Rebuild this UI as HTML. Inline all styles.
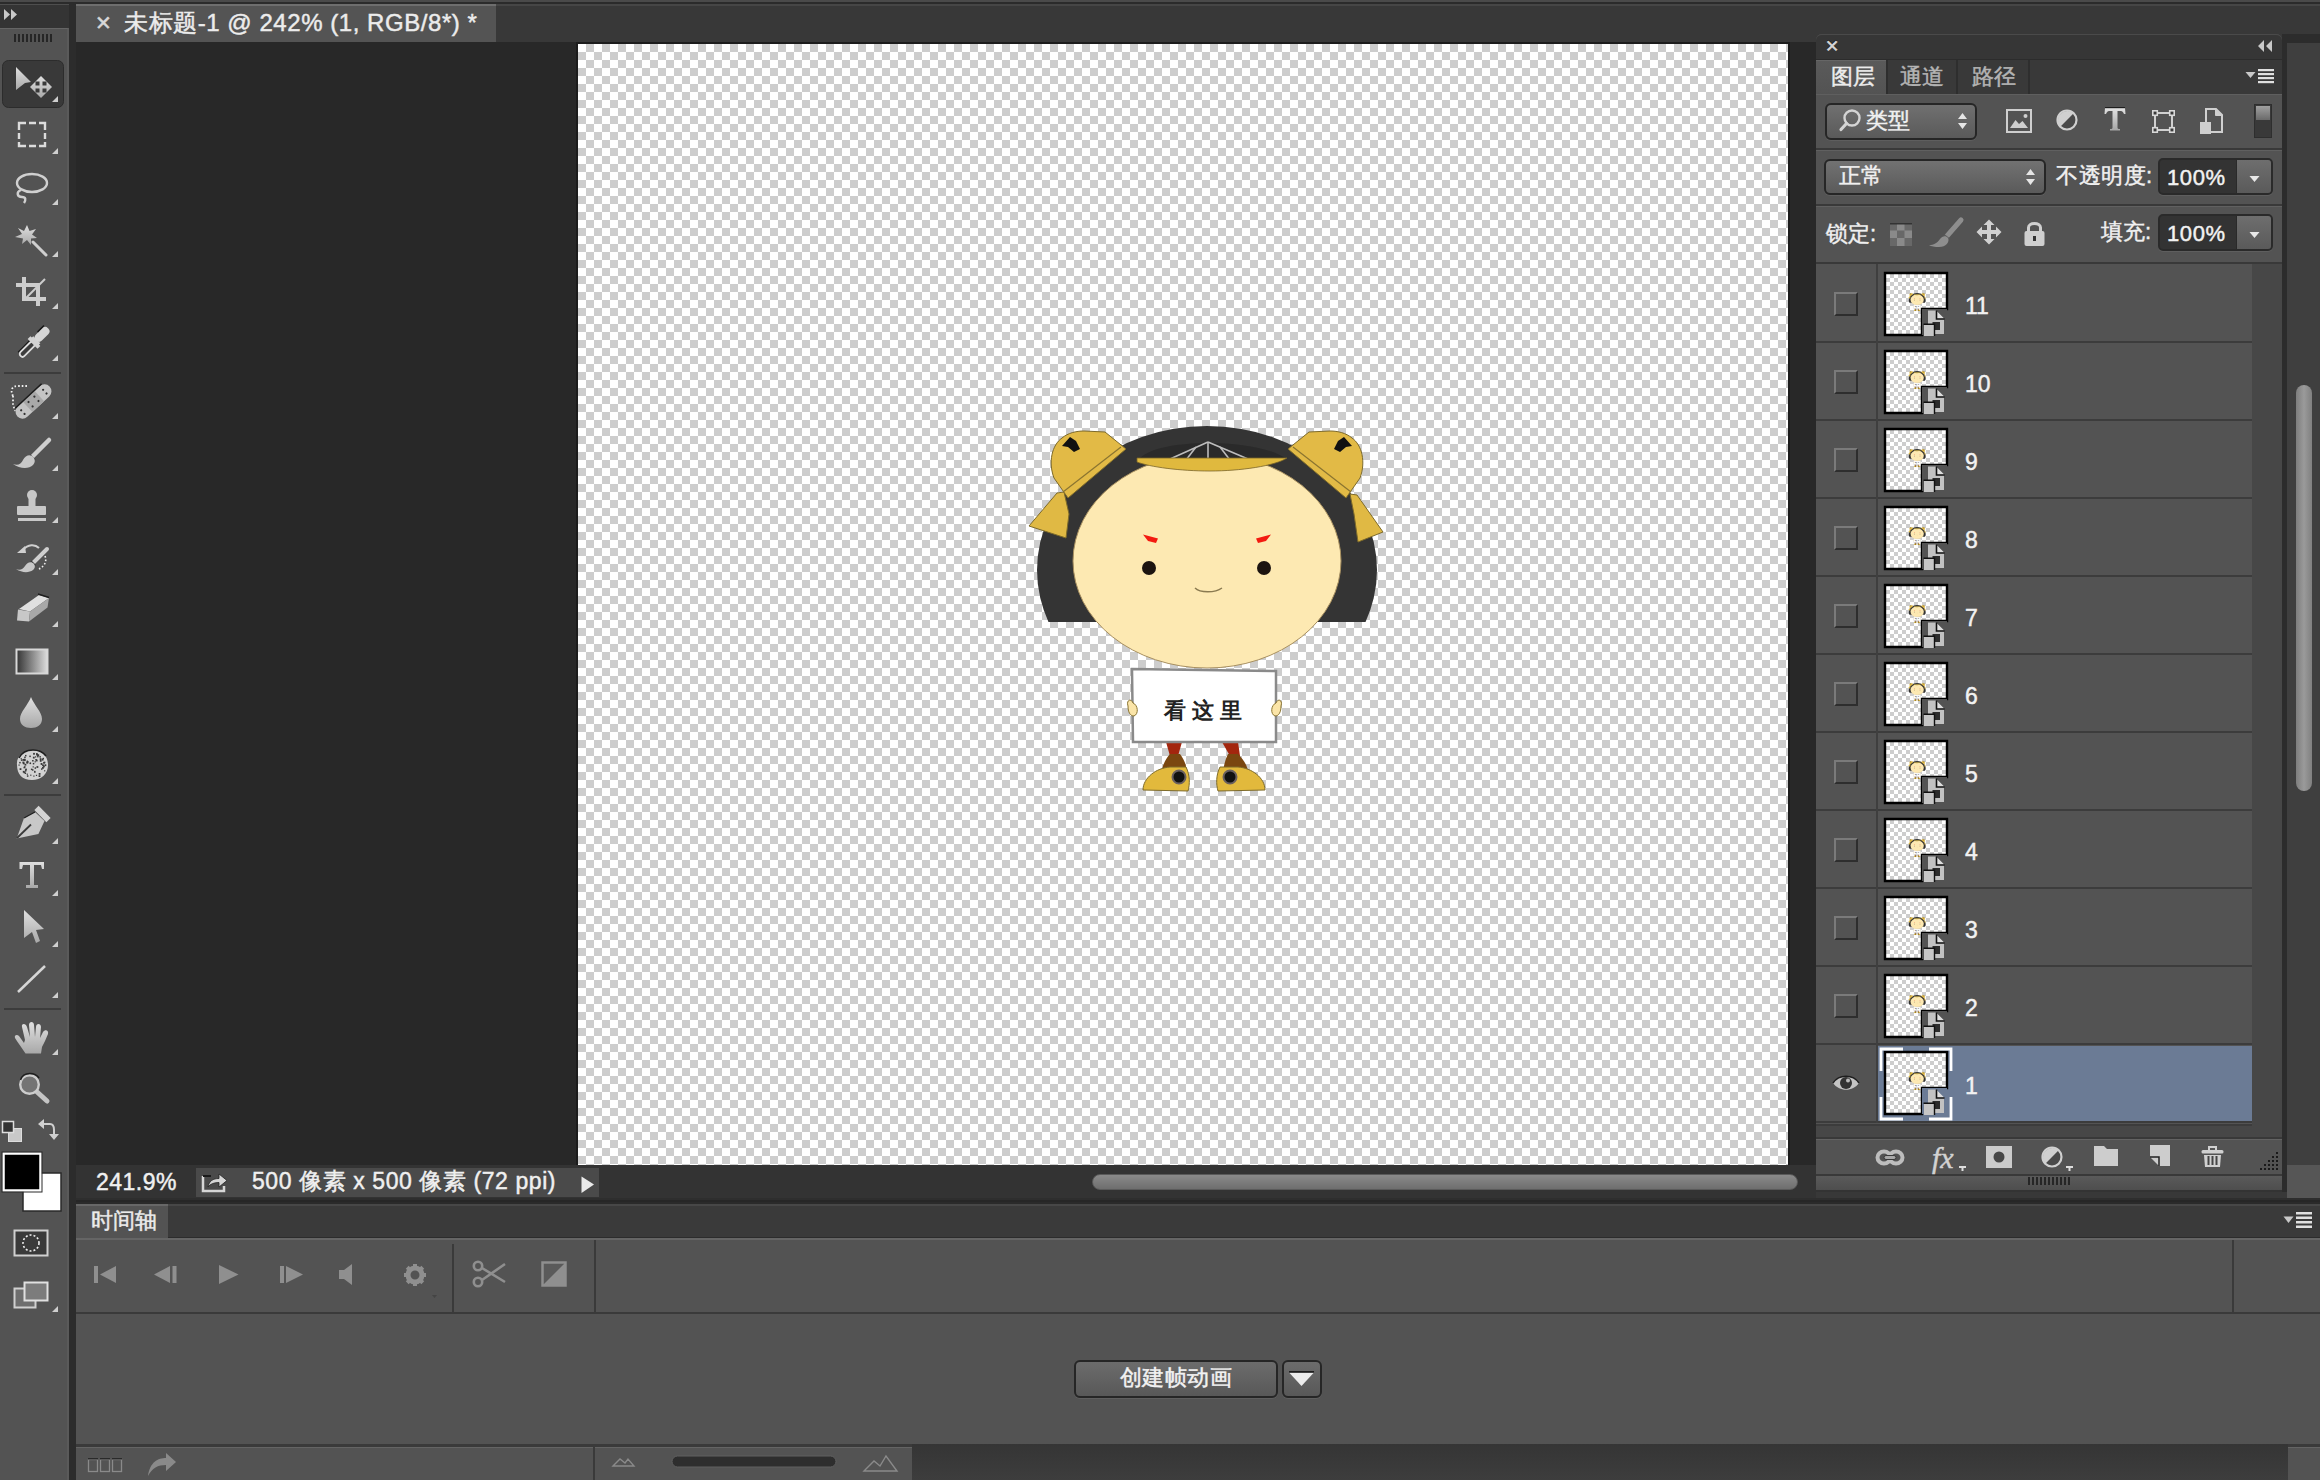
<!DOCTYPE html>
<html><head><meta charset="utf-8">
<style>
*{margin:0;padding:0;box-sizing:border-box}
html,body{width:2320px;height:1480px;overflow:hidden;background:#282828;font-family:"Liberation Sans",sans-serif;color:#e8e8e8}
.a{position:absolute}
svg{position:absolute;overflow:visible}
.t{position:absolute;white-space:nowrap;line-height:1;-webkit-text-stroke:0.45px currentColor}
</style></head><body>
<!-- top strip -->
<div class="a" style="left:0;top:0;width:2320px;height:2px;background:#4a4a4a"></div>
<div class="a" style="left:0;top:2px;width:2320px;height:2px;background:#2b2b2b"></div>
<!-- tab bar bg -->
<div class="a" style="left:76px;top:4px;width:2244px;height:38px;background:#383838;border-top:2px solid #464646"></div>
<div class="a" style="left:69px;top:4px;width:7px;height:1476px;background:#2c2c2c"></div>
<!-- toolbar header -->
<div class="a" style="left:0;top:4px;width:69px;height:24px;background:#343434;border-top:1px solid #4e4e4e"></div>
<!-- toolbar body -->
<div class="a" style="left:0;top:28px;width:69px;height:1452px;background:#535353;border-top:1px solid #656565;border-right:2px solid #5a5a5a"></div>



<svg width="0" height="0" style="position:absolute">
<defs>
<symbol id="ch" viewBox="0 0 1210 1210">
<g transform="translate(-578 -44)">
<!-- hair -->
<clipPath id="hc"><rect x="1000" y="400" width="420" height="222"/></clipPath>
<ellipse cx="1207" cy="570" rx="170" ry="144" fill="#343434" clip-path="url(#hc)"/>
<!-- gold triangles -->
<polygon points="1029,526 1057,493 1064,492 1069,514 1066,538" fill="#e0b944" stroke="#7d6a2a" stroke-width="1"/>
<polygon points="1350,494 1357,495 1383,532 1358,542 1354,514" fill="#e0b944" stroke="#7d6a2a" stroke-width="1"/>
<!-- buns -->
<path d="M1084 431 L1105 432 L1126 449 L1068 498 L1054 478 C1048 462 1052 445 1062 438 C1068 433 1076 431 1084 431Z" fill="#e2ba46" stroke="#7d6a2a" stroke-width="1"/>
<path d="M1121 447 L1063 492" stroke="#8a7430" stroke-width="1.2"/>
<path d="M1330 431 L1309 432 L1288 449 L1346 498 L1360 478 C1366 462 1362 445 1352 438 C1346 433 1338 431 1330 431Z" fill="#e2ba46" stroke="#7d6a2a" stroke-width="1"/>
<path d="M1293 447 L1351 492" stroke="#8a7430" stroke-width="1.2"/>
<path d="M1062 446 L1070 437 L1076 441 L1080 449 L1074 452 L1068 447Z" fill="#111"/>
<path d="M1352 446 L1344 437 L1338 441 L1334 449 L1340 452 L1346 447Z" fill="#111"/>
<!-- face -->
<ellipse cx="1207" cy="561" rx="134" ry="107" fill="#fde9b2" stroke="#a89060" stroke-width="1"/>
<!-- hat top fan -->
<path d="M1140 458 C1160 438 1255 438 1285 458Z" fill="#2a2a2a"/>
<g stroke="#bdbdbd" stroke-width="1.6" fill="none">
<path d="M1208 442 L1208 460"/><path d="M1208 442 L1170 459"/><path d="M1208 442 L1248 459"/>
<path d="M1196 447 L1186 460"/><path d="M1220 447 L1230 460"/>
</g>
<!-- hat band -->
<path d="M1137 458 L1287 458 C1275 466 1240 471 1210 471 C1180 471 1150 467 1137 462Z" fill="#e0b93e" stroke="#7a6528" stroke-width="0.8"/>
<!-- brows -->
<polygon points="1143,534.5 1158,538.5 1156,543 1148,541" fill="#f31a10"/>
<polygon points="1271,534.5 1256,538.5 1258,543 1266,541" fill="#f31a10"/>
<!-- eyes -->
<circle cx="1149" cy="568" r="7" fill="#1c1410"/>
<circle cx="1264" cy="568" r="7" fill="#1c1410"/>
<!-- mouth -->
<path d="M1195 588 C1200 593 1215 593 1222 588" stroke="#8a7a50" stroke-width="1.4" fill="none"/>
<!-- legs -->
<polygon points="1166,742 1182,742 1178,756 1170,756" fill="#a3260e"/>
<polygon points="1222,742 1238,742 1240,756 1230,756" fill="#a3260e"/>
<path d="M1170 754 L1180 754 C1186 762 1188 770 1186 780 L1162 782 C1160 772 1163 762 1170 754Z" fill="#7a4710"/>
<path d="M1228 754 L1238 754 C1246 762 1250 770 1248 782 L1224 782 C1222 772 1224 762 1228 754Z" fill="#7a4710"/>
<!-- shoes -->
<path d="M1143 790 C1143 778 1156 768 1170 767 L1186 767 C1190 775 1190 784 1188 791Z" fill="#e2b93c" stroke="#7d6a2a" stroke-width="1"/>
<path d="M1265 790 C1265 778 1252 768 1238 767 L1220 767 C1216 775 1216 784 1218 791Z" fill="#e2b93c" stroke="#7d6a2a" stroke-width="1"/>
<circle cx="1179" cy="777" r="6.5" fill="#111" stroke="#6a6060" stroke-width="2"/>
<circle cx="1230" cy="777" r="6.5" fill="#111" stroke="#6a6060" stroke-width="2"/>
<!-- sign -->
<polygon points="1132,669 1276,671 1276,742 1133,742" fill="#fff" stroke="#8a8a8a" stroke-width="2.5"/>
<text x="1164" y="718" font-family="Liberation Sans" font-size="22" font-weight="bold" fill="#222" letter-spacing="6">看这里</text>
<!-- hands -->
<path d="M1128 706 C1126 700 1131 698 1133 703 C1138 705 1139 714 1134 716 C1130 716 1128 712 1128 706Z" fill="#fbe5a8" stroke="#8a7430" stroke-width="1"/>
<path d="M1281 706 C1283 700 1278 698 1276 703 C1271 705 1270 714 1275 716 C1279 716 1281 712 1281 706Z" fill="#fbe5a8" stroke="#8a7430" stroke-width="1"/>
</g>
</symbol>
<pattern id="ck4" width="8" height="8" patternUnits="userSpaceOnUse" x="2" y="2"><rect width="8" height="8" fill="#fff"/><rect x="4" width="4" height="4" fill="#cdcdcd"/><rect y="4" width="4" height="4" fill="#cdcdcd"/></pattern>
</defs>
</svg>

<!-- toolbar icons -->
<svg style="left:0;top:0" width="70" height="1480" viewBox="0 0 70 1480">
<defs>
<linearGradient id="ig" x1="0" y1="0" x2="0" y2="1"><stop offset="0" stop-color="#e0e0e0"/><stop offset="1" stop-color="#a8a8a8"/></linearGradient>
</defs>
<g fill="#c9c9c9"><path d="M4 9 L10 14.5 L4 20Z M11 9 L17 14.5 L11 20Z"/></g>
<g fill="#262626"><rect x="14" y="34" width="2" height="8"/><rect x="18" y="34" width="2" height="8"/><rect x="22" y="34" width="2" height="8"/><rect x="26" y="34" width="2" height="8"/><rect x="30" y="34" width="2" height="8"/><rect x="34" y="34" width="2" height="8"/><rect x="38" y="34" width="2" height="8"/><rect x="42" y="34" width="2" height="8"/><rect x="46" y="34" width="2" height="8"/><rect x="50" y="34" width="2" height="8"/></g>
<!-- selected box -->
<rect x="2.5" y="60.5" width="61" height="47" rx="6" fill="#393939" stroke="#2c2c2c" stroke-width="1"/>
<g fill="url(#ig)">
<path d="M16 67 L31 82 L25 83 L16 90Z"/>
<path d="M41 76 L52 87 L41 98 L30 87Z"/></g><g fill="#393939"><rect x="35.5" y="81.5" width="4" height="4"/><rect x="42.5" y="81.5" width="4" height="4"/><rect x="35.5" y="88.5" width="4" height="4"/><rect x="42.5" y="88.5" width="4" height="4"/></g><g>
</g>
<g fill="#cfcfcf">
<path d="M58 96 L58 102 L52 102Z"/><path d="M58 148 L58 154 L52 154Z"/><path d="M58 199 L58 205 L52 205Z"/>
<path d="M58 251 L58 257 L52 257Z"/><path d="M58 303 L58 309 L52 309Z"/><path d="M58 355 L58 361 L52 361Z"/>
<path d="M58 413 L58 419 L52 419Z"/><path d="M58 465 L58 471 L52 471Z"/><path d="M58 517 L58 523 L52 523Z"/>
<path d="M58 569 L58 575 L52 575Z"/><path d="M58 621 L58 627 L52 627Z"/><path d="M58 674 L58 680 L52 680Z"/>
<path d="M58 726 L58 732 L52 732Z"/><path d="M58 778 L58 784 L52 784Z"/>
<path d="M58 838 L58 844 L52 844Z"/><path d="M58 890 L58 896 L52 896Z"/><path d="M58 941 L58 947 L52 947Z"/>
<path d="M58 992 L58 998 L52 998Z"/><path d="M58 1049 L58 1055 L52 1055Z"/>
<path d="M58 1306 L58 1312 L52 1312Z"/>
</g>
<!-- marquee -->
<g fill="none" stroke="#dcdcdc" stroke-width="2.4"><path d="M19 130 V123 H26 M29 123 H36 M39 123 H45 V130 M45 133 V139 M45 142 V146 H39 M36 146 H29 M26 146 H19 V142 M19 139 V133"/></g>
<!-- lasso -->
<g fill="none" stroke="#d0d0d0" stroke-width="2.4">
<ellipse cx="32" cy="183" rx="15" ry="9"/>
<path d="M21 190 C16 192 17 197 22 197 C26 197 26 200 24 203"/>
</g>
<!-- wand -->
<path fill="url(#ig)" d="M27 225 L29.5 231 L36 229 L32 234.5 L37 238 L31 238.5 L31 245 L27 240 L22 244 L23 238.5 L15 237 L22 234 L18 228 L24 231Z"/>
<path d="M33 242 L46 255" stroke="#cfcfcf" stroke-width="3" stroke-linecap="round"/>
<!-- crop -->
<g fill="#cdcdcd">
<rect x="22" y="277" width="4" height="24"/><rect x="16" y="283" width="24" height="4"/>
<rect x="36" y="283" width="4" height="23"/><rect x="22" y="297" width="24" height="4"/>
<path d="M25 299 L45 279" stroke="#cdcdcd" stroke-width="2"/>
</g>
<!-- eyedropper -->
<g transform="translate(34 342.5) rotate(-45)">
<path d="M-18 -4.2 L0 -4.2" stroke="#161616" stroke-width="1.6"/>
<rect x="-19" y="-2.8" width="19" height="5.6" rx="2.8" fill="#3c3c3c" stroke="#dcdcdc" stroke-width="1.8"/>
<path d="M-2 -7 L2 -7 L2 -5 L4 -5 L4 5 L2 5 L2 7 L-2 7Z" fill="#d2d2d2"/>
<rect x="3" y="-4.2" width="17" height="8.4" rx="4" fill="#d6d6d6"/>
<path d="M10 -5 L19 -5" stroke="#161616" stroke-width="1.4"/>
</g>
<rect x="4" y="372" width="57" height="2" fill="#3c3c3c"/>
<!-- healing -->
<g>
<path d="M13 396 C10 390 12 386 18 386 L27 386" fill="none" stroke="#f0f0f0" stroke-width="1.8" stroke-dasharray="1.6 2"/>
<path d="M13 396 L13 404 L15 411" fill="none" stroke="#f0f0f0" stroke-width="1.8" stroke-dasharray="1.6 2"/>
<g transform="translate(33.5 401.5) rotate(-43)">
<rect x="-22" y="-7" width="44" height="14" rx="7" fill="#c4c4c4"/>
<rect x="-8" y="-7" width="16" height="14" fill="#a8a8a8"/>
<path d="M-18 -7.5 L18 -7.5" stroke="#1c1c1c" stroke-width="1.5"/>
<g fill="#333"><circle cx="-15" cy="-2" r="1.1"/><circle cx="-15" cy="3" r="1.1"/><circle cx="-4" cy="-3" r="1.1"/><circle cx="4" cy="-3" r="1.1"/><circle cx="-4" cy="3" r="1.1"/><circle cx="4" cy="3" r="1.1"/><circle cx="15" cy="-2" r="1.1"/><circle cx="15" cy="3" r="1.1"/></g>
</g>
</g>
<!-- brush -->
<g>
<path d="M32 457 L49 440" stroke="#cfcfcf" stroke-width="4.5" stroke-linecap="round"/>
<path d="M30 455 L35 460" stroke="#3a3a3a" stroke-width="1.6"/>
<path d="M13 464 C18 466 21 464 23 460 C25 456 29 454 32 456 C35 458 36 462 33 465 C29 469 20 469 13 464Z" fill="#c8c8c8"/>
</g>
<!-- stamp -->
<g fill="#c8c8c8">
<circle cx="32" cy="495" r="5"/><rect x="28.5" y="497" width="7" height="10"/>
<rect x="17" y="506" width="29" height="9" rx="1"/><rect x="18" y="518" width="28" height="3"/>
</g>
<!-- history brush -->
<g>
<path d="M33 563 L47 549" stroke="#cfcfcf" stroke-width="4" stroke-linecap="round"/>
<path d="M31 561 L35.5 565.5" stroke="#3a3a3a" stroke-width="1.5"/>
<path d="M16 569 C20 571 23 569 25 566 C27 563 30 561 33 563 C35.5 565 35.5 568 33 570 C29 573 22 573 16 569Z" fill="#c8c8c8"/>
<path d="M23 550 C28 544 35 544 39 548" fill="none" stroke="#cfcfcf" stroke-width="2"/>
<path d="M17 553 L25 546 L26 553Z" fill="#cfcfcf"/>
<path d="M45 556 C47 561 45 566 39 569" fill="none" stroke="#f0f0f0" stroke-width="1.6" stroke-dasharray="1.6 2"/>
</g>
<!-- eraser -->
<g>
<path d="M19 609 L39 595 L49 598 L30 611.5Z" fill="#e0e0e0"/>
<path d="M38 594 L49 597.5" stroke="#1e1e1e" stroke-width="1.4"/>
<path d="M18 609.5 L30 611.5 L29 621.5 L17 620.5Z" fill="#c8c8c8"/>
<path d="M30 611.5 L49 598 L47.5 607.5 L29 621.5Z" fill="#a8a8a8"/>
</g>
<!-- gradient -->
<defs><linearGradient id="gg" x1="0" x2="1"><stop offset="0" stop-color="#333"/><stop offset="1" stop-color="#ddd"/></linearGradient></defs>
<rect x="16.5" y="649.5" width="31" height="24" fill="url(#gg)" stroke="#d8d8d8" stroke-width="2"/>
<!-- blur drop -->
<path d="M31 697 C34 705 42 712 42 719 C42 725 37 728 31 728 C25 728 20 725 20 719 C20 712 28 705 31 697Z" fill="url(#ig)"/>
<!-- sponge -->
<g>
<path d="M17 765 C16 756 24 750 33 750 C42 750 48 756 48 765 C48 774 41 780 32 780 C22 780 17 774 17 765Z" fill="#d2d2d2"/>
<path d="M19 758 C22 752 27 750 33 750 C39 750 43 752 46 756" fill="none" stroke="#1e1e1e" stroke-width="1.5"/>
<g fill="#3a3a3a"><rect x="24.1" y="766.2" width="1.5" height="1.5"/><rect x="44.5" y="764.3" width="1.8" height="1.8"/><rect x="42.1" y="758.5" width="1.2" height="1.2"/><rect x="22.8" y="770.9" width="1.8" height="1.8"/><rect x="42.1" y="764.4" width="1.8" height="1.8"/><rect x="42.8" y="757.8" width="1.2" height="1.2"/><rect x="43.0" y="765.6" width="1.8" height="1.8"/><rect x="41.7" y="758.8" width="1.8" height="1.8"/><rect x="38.6" y="775.2" width="1.8" height="1.8"/><rect x="40.6" y="763.0" width="1.8" height="1.8"/><rect x="41.0" y="763.5" width="1.2" height="1.2"/><rect x="35.8" y="759.6" width="1.8" height="1.8"/><rect x="42.0" y="767.0" width="1.8" height="1.8"/><rect x="34.6" y="767.3" width="1.5" height="1.5"/><rect x="37.1" y="755.9" width="1.5" height="1.5"/><rect x="34.1" y="770.8" width="1.2" height="1.2"/><rect x="25.0" y="754.9" width="1.5" height="1.5"/><rect x="29.3" y="755.6" width="1.5" height="1.5"/><rect x="29.8" y="762.7" width="1.2" height="1.2"/><rect x="26.9" y="775.3" width="1.5" height="1.5"/><rect x="22.9" y="762.5" width="1.8" height="1.8"/><rect x="24.9" y="770.1" width="1.5" height="1.5"/><rect x="43.9" y="761.7" width="1.5" height="1.5"/><rect x="43.1" y="761.9" width="1.8" height="1.8"/><rect x="37.4" y="754.3" width="1.8" height="1.8"/><rect x="25.1" y="768.6" width="1.8" height="1.8"/><rect x="24.1" y="759.6" width="1.5" height="1.5"/><rect x="32.6" y="766.3" width="1.2" height="1.2"/><rect x="26.4" y="761.7" width="1.8" height="1.8"/><rect x="36.0" y="753.1" width="1.8" height="1.8"/><rect x="27.0" y="761.0" width="1.5" height="1.5"/><rect x="35.3" y="759.0" width="1.5" height="1.5"/><rect x="24.5" y="763.8" width="1.8" height="1.8"/><rect x="35.0" y="756.3" width="1.2" height="1.2"/><rect x="26.4" y="761.5" width="1.8" height="1.8"/><rect x="24.9" y="772.8" width="1.2" height="1.2"/><rect x="34.1" y="771.3" width="1.5" height="1.5"/><rect x="32.0" y="769.2" width="1.5" height="1.5"/><rect x="24.2" y="756.6" width="1.5" height="1.5"/><rect x="36.5" y="754.1" width="1.8" height="1.8"/><rect x="26.7" y="760.5" width="1.2" height="1.2"/><rect x="30.2" y="774.6" width="1.2" height="1.2"/><rect x="23.5" y="766.8" width="1.5" height="1.5"/><rect x="32.9" y="756.7" width="1.8" height="1.8"/><rect x="22.5" y="759.0" width="1.8" height="1.8"/><rect x="19.6" y="768.2" width="1.8" height="1.8"/><rect x="20.9" y="759.4" width="1.5" height="1.5"/><rect x="30.9" y="768.6" width="1.5" height="1.5"/><rect x="29.6" y="762.6" width="1.5" height="1.5"/><rect x="23.7" y="771.6" width="1.8" height="1.8"/><rect x="33.3" y="775.5" width="1.2" height="1.2"/><rect x="20.6" y="758.1" width="1.2" height="1.2"/><rect x="44.1" y="770.2" width="1.2" height="1.2"/><rect x="39.4" y="756.1" width="1.5" height="1.5"/><rect x="33.1" y="752.9" width="1.8" height="1.8"/><rect x="24.2" y="758.9" width="1.2" height="1.2"/><rect x="35.9" y="774.8" width="1.2" height="1.2"/><rect x="39.7" y="758.2" width="1.8" height="1.8"/><rect x="32.8" y="762.9" width="1.5" height="1.5"/><rect x="26.7" y="773.6" width="1.2" height="1.2"/><rect x="18.5" y="764.5" width="1.2" height="1.2"/><rect x="32.1" y="760.0" width="1.5" height="1.5"/><rect x="19.2" y="761.9" width="1.5" height="1.5"/><rect x="34.6" y="761.2" width="1.2" height="1.2"/><rect x="38.7" y="773.0" width="1.8" height="1.8"/><rect x="22.4" y="761.6" width="1.8" height="1.8"/><rect x="36.5" y="766.1" width="1.8" height="1.8"/><rect x="41.0" y="768.3" width="1.5" height="1.5"/><rect x="39.8" y="760.0" width="1.8" height="1.8"/><rect x="23.6" y="758.8" width="1.8" height="1.8"/></g>
</g>
<rect x="4" y="794" width="57" height="2" fill="#3c3c3c"/>
<!-- pen -->
<g>
<path d="M16.7 838.4 L24 818 L35 812 L44.5 821 L38.4 834Z" fill="#c8c8c8"/>
<path d="M24 818 L35 812" stroke="#1e1e1e" stroke-width="1.3"/>
<path d="M17 838 L31 824.5" stroke="#3a3a3a" stroke-width="1.8"/>
<rect x="34" y="811" width="17" height="6" transform="rotate(45 42.5 814)" fill="#d4d4d4"/>
</g>
<!-- type -->
<path d="M19.5 862 L44 862 L44 869 L42 869 L41 865 L34 865 L34 885 L38 885 L38 888 L26 888 L26 885 L30 885 L30 865 L23 865 L22 869 L19.5 869Z" fill="url(#ig)"/>
<!-- path select -->
<path d="M24 910 L44 929 L36 930 L40 941 L36 943 L32 932 L24 938Z" fill="url(#ig)"/>
<!-- line -->
<path d="M18 992 L45 966" stroke="#d6d6d6" stroke-width="2.5"/>
<rect x="4" y="1008" width="57" height="2" fill="#3c3c3c"/>
<!-- hand -->
<path d="M25.5 1053.5 L41 1053.5 L42 1047 C44 1043 46 1039 48 1034 C49 1030 45 1029 43 1032 L40 1038 L41 1027 C41 1023 36 1023 36 1027 L35 1037 L34 1025 C34 1021 29 1021 29 1025 L30 1037 L27 1027 C26 1023 21 1023 22 1027 L25 1040 L24 1043 L19 1036 C17 1034 14 1035 15 1038 C18 1043 22 1048 25.5 1053.5Z" fill="url(#ig)"/>
<!-- zoom -->
<g>
<path d="M36 1091 L47 1101" stroke="#c4c4c4" stroke-width="5" stroke-linecap="round"/>
<circle cx="29.5" cy="1084.5" r="9.3" fill="#747474" stroke="#cdcdcd" stroke-width="2.4"/>
<path d="M20.5 1080 C22 1075 26 1073.5 30 1073.5 C34 1073.5 37 1075 39 1078" fill="none" stroke="#1e1e1e" stroke-width="1.4"/>
</g>
<!-- default colors -->
<rect x="8.5" y="1128.5" width="13" height="13" fill="#c8c8c8" stroke="#ddd" stroke-width="1"/>
<rect x="2.5" y="1121.5" width="11" height="11" fill="#333" stroke="#ddd" stroke-width="1.5"/>
<!-- swap -->
<g fill="none" stroke="#d0d0d0" stroke-width="2"><path d="M43 1124 L50 1124 C53 1124 54 1127 54 1130 L54 1134"/></g>
<path d="M38 1124 L44 1119 L44 1129Z M49 1134 L59 1134 L54 1140Z" fill="#d0d0d0"/>
<!-- bg/fg -->
<rect x="23" y="1173" width="38" height="38" fill="#fff" stroke="#2a2a2a" stroke-width="1.5"/>
<rect x="3.5" y="1153.5" width="37" height="37" fill="#000" stroke="#fff" stroke-width="2.5"/>
<rect x="2" y="1152" width="40" height="40" fill="none" stroke="#2a2a2a" stroke-width="1"/>
<!-- quick mask -->
<rect x="14.5" y="1230.5" width="33" height="25" fill="#3a3a3a" stroke="#d0d0d0" stroke-width="2"/>
<circle cx="31" cy="1243" r="8" fill="none" stroke="#eee" stroke-width="1.6" stroke-dasharray="2 2"/>
<!-- screen mode -->
<rect x="14.5" y="1288.5" width="21" height="19" fill="#6e6e6e" stroke="#d0d0d0" stroke-width="2"/>
<rect x="24.5" y="1282.5" width="23" height="18" fill="#7c7c7c" stroke="#e0e0e0" stroke-width="2"/>
</svg>

<!-- document tab -->
<div class="a" style="left:76px;top:4px;width:420px;height:38px;background:#545454;border-top:2px solid #6e6e6e"></div>
<div class="t" style="left:95px;top:13px;font-size:20px;color:#d8d8d8">&#x2715;</div>
<div class="t" id="title" style="left:124px;top:11px;font-size:24px;color:#ececec;letter-spacing:0.55px">未标题-1 @ 242% (1, RGB/8*) *</div>

<!-- canvas -->
<div class="a" style="left:576px;top:42px;width:1214px;height:1126px;background:#1c1c1c"></div>
<div class="a" id="canvas" style="left:578px;top:44px;width:1210px;height:1122px;background:conic-gradient(#cdcdcd 0 25%,#fff 0 50%,#cdcdcd 0 75%,#fff 0);background-size:16px 16px"></div>

<svg style="left:578px;top:44px" width="1210" height="1121" viewBox="0 0 1210 1121"><use href="#ch" x="0" y="0" width="1210" height="1210"/></svg>
<!-- status bar -->
<div class="a" style="left:76px;top:1165px;width:1740px;height:34px;background:#333333"></div>
<div class="a" style="left:196px;top:1168px;width:403px;height:29px;background:#4a4a4a"></div>
<div class="t" style="left:96px;top:1171px;font-size:23px;color:#f0f0f0;letter-spacing:0.5px">241.9%</div>
<div class="t" style="left:252px;top:1170px;font-size:23px;color:#f0f0f0;letter-spacing:0.58px">500 像素 x 500 像素 (72 ppi)</div>
<svg style="left:201px;top:1171px" width="28" height="22"><path d="M2 5 L2 20 L23 20 L23 15" fill="none" stroke="#d6d6d6" stroke-width="2.5"/><path d="M2 5 L10 5" stroke="#1a1a1a" stroke-width="2"/><path d="M7 16 C8 10 12 7.5 18 7.5 L18 3 L26 9.5 L18 16 L18 11.5 C13 11.5 9 13 7 16Z" fill="#d6d6d6" stroke="#222" stroke-width="0.8"/></svg>
<svg style="left:581px;top:1176px" width="14" height="18"><path d="M0.5 0.5 L13 8.5 L0.5 17Z" fill="#eaeaea"/></svg>
<!-- h scrollbar -->
<div class="a" style="left:1092px;top:1174px;width:706px;height:16px;border-radius:8px;background:linear-gradient(#8a8a8a,#6e6e6e);border:1px solid #5a5a5a"></div>

<!-- layers panel -->
<div class="a" style="left:1816px;top:34px;width:466px;height:1156px;background:#535353;border-radius:6px 6px 0 0"></div>

<!-- LP -->
<div class="a" style="left:1816px;top:34px;width:466px;height:26px;background:#363636;border-radius:6px 6px 0 0;border-top:1px solid #4a4a4a"></div>
<div class="t" style="left:1825px;top:38px;font-size:17px;color:#d6d6d6;text-shadow:0 -1px 0 #000">&#x2715;</div>
<svg style="left:2258px;top:40px" width="16" height="13"><path d="M0 6 L6 0 L6 12Z M8 6 L14 0 L14 12Z" fill="#c8c8c8"/></svg>
<div class="a" style="left:1816px;top:59px;width:466px;height:35px;background:#393939;border-top:1px solid #2c2c2c"></div>
<div class="a" style="left:1816px;top:60px;width:70px;height:35px;background:linear-gradient(#5a5a5a,#535353);border-top:1px solid #666"></div>
<div class="a" style="left:1886px;top:60px;width:2px;height:34px;background:#2e2e2e"></div>
<div class="a" style="left:1956px;top:60px;width:2px;height:34px;background:#2e2e2e"></div>
<div class="a" style="left:2028px;top:60px;width:2px;height:34px;background:#2e2e2e"></div>
<div class="t" style="left:1831px;top:66px;font-size:22px;color:#ececec">图层</div>
<div class="t" style="left:1900px;top:66px;font-size:22px;color:#b4b4b4">通道</div>
<div class="t" style="left:1972px;top:66px;font-size:22px;color:#b4b4b4">路径</div>
<svg style="left:2245px;top:68px" width="30" height="17"><path d="M0.5 4 L10.5 4 L5.5 10Z" fill="#c8c8c8"/><g fill="#e0e0e0"><rect x="13" y="1" width="16" height="2.2"/><rect x="13" y="5" width="16" height="2.2"/><rect x="13" y="9" width="16" height="2.2"/><rect x="13" y="13" width="16" height="2.2"/></g></svg>
<div class="a" style="left:1816px;top:94px;width:466px;height:1px;background:#5f5f5f"></div>
<div class="a" style="left:1825px;top:103px;width:152px;height:37px;border-radius:6px;background:linear-gradient(#707070,#5a5a5a);border:2px solid #262626;box-shadow:0 1px 0 #5e5e5e"></div>
<svg style="left:1838px;top:109px" width="26" height="26"><circle cx="14" cy="9" r="7.5" fill="none" stroke="#d4d4d4" stroke-width="2.4"/><path d="M8.5 14.5 L3 20.5" stroke="#d4d4d4" stroke-width="3.2" stroke-linecap="round"/></svg>
<div class="t" style="left:1866px;top:110px;font-size:22px;color:#f0f0f0">类型</div>
<svg style="left:1957px;top:112px" width="12" height="20"><path d="M1 7 L5.5 1 L10 7Z M1 11 L10 11 L5.5 17Z" fill="#e6e6e6"/></svg>
<svg style="left:2006px;top:108px" width="28" height="26"><rect x="1" y="2" width="24" height="22" fill="none" stroke="#cfcfcf" stroke-width="2"/><path d="M4 20 L9.5 12 L13 16 L16.5 13 L22 20Z" fill="#cfcfcf"/><circle cx="19.5" cy="8" r="2" fill="#cfcfcf"/></svg>
<svg style="left:2056px;top:109px" width="24" height="24"><circle cx="11" cy="11" r="9.5" fill="#4a4a4a" stroke="#d0d0d0" stroke-width="2.2"/><path d="M4.3 17.7 A9.5 9.5 0 0 1 17.7 4.3Z" fill="#d0d0d0"/></svg>
<svg style="left:2104px;top:107px" width="23" height="25"><defs><linearGradient id="tg" x1="0" y1="0" x2="0" y2="1"><stop offset="0" stop-color="#e2e2e2"/><stop offset="1" stop-color="#a6a6a6"/></linearGradient></defs><path d="M1 1 L21 1 L21.5 7 L20 7 C19 4.5 18 4 15.5 4 L13.5 4 L13.5 20.5 C13.5 21.5 14 22 16 22 L16 23.5 L6 23.5 L6 22 C8 22 8.5 21.5 8.5 20.5 L8.5 4 L6.5 4 C4 4 3 4.5 2 7 L0.5 7Z" fill="url(#tg)"/><rect x="1" y="0" width="20" height="1.2" fill="#1e1e1e"/></svg>
<svg style="left:2152px;top:110px" width="24" height="24"><rect x="3" y="3" width="17" height="17" fill="none" stroke="#d0d0d0" stroke-width="2"/><g fill="#3a3a3a" stroke="#d8d8d8" stroke-width="1.6"><rect x="0.8" y="0.8" width="4.5" height="4.5"/><rect x="17.7" y="0.8" width="4.5" height="4.5"/><rect x="0.8" y="17.7" width="4.5" height="4.5"/><rect x="17.7" y="17.7" width="4.5" height="4.5"/></g></svg>
<svg style="left:2200px;top:108px" width="24" height="28"><path d="M6 1 L16 1 L22 7 L22 24 L6 24Z" fill="#555" stroke="#d0d0d0" stroke-width="2"/><path d="M15.5 1 L15.5 7.5 L22 7.5" fill="#d0d0d0" stroke="#d0d0d0" stroke-width="1"/><rect x="0" y="14" width="11" height="12" fill="#cfcfcf"/></svg>
<div class="a" style="left:2254px;top:104px;width:18px;height:34px;background:#393939;border:1px solid #2e2e2e"></div>
<div class="a" style="left:2256px;top:106px;width:14px;height:14px;background:linear-gradient(#a0a0a0,#6a6a6a)"></div>
<div class="a" style="left:1816px;top:148px;width:466px;height:2px;background:#393939"></div>
<div class="a" style="left:1816px;top:150px;width:466px;height:1px;background:#606060"></div>
<div class="a" style="left:1824px;top:159px;width:222px;height:36px;border-radius:6px;background:linear-gradient(#727272,#5a5a5a);border:2px solid #262626;box-shadow:0 1px 0 #5e5e5e"></div>
<div class="t" style="left:1839px;top:165px;font-size:22px;color:#f0f0f0">正常</div>
<svg style="left:2025px;top:168px" width="12" height="20"><path d="M1 7 L5.5 1 L10 7Z M1 11 L10 11 L5.5 17Z" fill="#e6e6e6"/></svg>
<div class="t" style="left:2056px;top:165px;font-size:22px;color:#f0f0f0;letter-spacing:0.5px">不透明度:</div>
<div class="a" style="left:2158px;top:158px;width:115px;height:37px;border-radius:5px;background:#333;border:2px solid #2a2a2a;box-shadow:0 1px 0 #5e5e5e;overflow:hidden"><div class="a" style="left:76px;top:0;width:37px;height:33px;background:linear-gradient(#6e6e6e,#5a5a5a);border-left:1px solid #2a2a2a"></div></div>
<div class="t" style="left:2167px;top:167px;font-size:22px;color:#f2f2f2;letter-spacing:0.6px">100%</div>
<svg style="left:2249px;top:175px" width="12" height="8"><path d="M0.5 1 L10.5 1 L5.5 7Z" fill="#e8e8e8"/></svg>
<div class="a" style="left:1816px;top:204px;width:466px;height:2px;background:#393939"></div>
<div class="a" style="left:1816px;top:206px;width:466px;height:1px;background:#606060"></div>
<div class="t" style="left:1826px;top:223px;font-size:22px;color:#f0f0f0">锁定:</div>
<svg style="left:1890px;top:223px" width="22" height="23"><rect width="22" height="23" fill="#8a8a8a"/><g fill="#686868"><rect x="0" y="0" width="7" height="7.5"/><rect x="14.5" y="0" width="7.5" height="7.5"/><rect x="7" y="7.5" width="7.5" height="7.5"/><rect x="0" y="15" width="7" height="8"/><rect x="14.5" y="15" width="7.5" height="8"/></g><rect x="0" y="0" width="22" height="1.5" fill="#333"/></svg>
<svg style="left:1928px;top:217px" width="36" height="31"><path d="M19 19 L33 3" stroke="#8e8e8e" stroke-width="5" stroke-linecap="round"/><path d="M16 18 L21 22" stroke="#5a5a5a" stroke-width="2"/><path d="M1 28 C6 28 9 26 12 22 C14 19 18 18 20 21 C22 25 18 30 11 30 C7 30 3 29.5 1 28Z" fill="#8e8e8e"/></svg>
<svg style="left:1976px;top:219px" width="26" height="27"><path d="M13 0.5 L18.5 6 L15 6 L15 11 L20 11 L20 7.5 L25.5 13 L20 18.5 L20 15 L15 15 L15 20 L18.5 20 L13 25.5 L7.5 20 L11 20 L11 15 L6 15 L6 18.5 L0.5 13 L6 7.5 L6 11 L11 11 L11 6 L7.5 6Z" fill="#d0d0d0"/></svg>
<svg style="left:2024px;top:220px" width="21" height="27"><path d="M4.5 11 L4.5 7.5 C4.5 2 16.5 2 16.5 7.5 L16.5 11" fill="none" stroke="#d0d0d0" stroke-width="3"/><rect x="0.5" y="11" width="20" height="15" rx="2" fill="#cfcfcf"/><rect x="9" y="16" width="3" height="5" fill="#333"/></svg>
<div class="t" style="left:2101px;top:221px;font-size:22px;color:#f0f0f0">填充:</div>
<div class="a" style="left:2158px;top:214px;width:115px;height:37px;border-radius:5px;background:#333;border:2px solid #2a2a2a;box-shadow:0 1px 0 #5e5e5e;overflow:hidden"><div class="a" style="left:76px;top:0;width:37px;height:33px;background:linear-gradient(#6e6e6e,#5a5a5a);border-left:1px solid #2a2a2a"></div></div>
<div class="t" style="left:2167px;top:223px;font-size:22px;color:#f2f2f2;letter-spacing:0.6px">100%</div>
<svg style="left:2249px;top:231px" width="12" height="8"><path d="M0.5 1 L10.5 1 L5.5 7Z" fill="#e8e8e8"/></svg>
<div class="a" style="left:1816px;top:262px;width:466px;height:2px;background:#393939"></div>
<div class="a" style="left:1816px;top:264px;width:436px;height:860px;background:#535353"></div>
<div class="a" style="left:2252px;top:264px;width:30px;height:874px;background:#474747"></div>
<div class="a" style="left:1816px;top:1124px;width:436px;height:14px;background:#474747;border-top:2px solid #3c3c3c"></div>
<div class="a" style="left:1816px;top:341px;width:436px;height:2px;background:#3c3c3c"></div>
<div class="a" style="left:1876px;top:264px;width:2px;height:79px;background:#3f3f3f"></div>
<div class="a" style="left:1834px;top:292px;width:24px;height:24px;background:#535353;border-top:2px solid #7a7a7a;border-left:2px solid #7a7a7a;border-bottom:2px solid #2e2e2e;border-right:2px solid #2e2e2e"></div>
<svg style="left:1884px;top:272px" width="64" height="64" viewBox="0 0 64 64">
<path d="M1 1 L63 1 L63 37 L38 37 L38 63 L1 63Z" fill="url(#ck4)" stroke="#000" stroke-width="2.4"/>
<svg x="2" y="2" width="60" height="60" viewBox="0 0 1210 1210"><use href="#ch" width="1210" height="1210"/></svg>
<path d="M38 37 L63 37 L63 63 L38 63Z" fill="#535353"/>
<g><path d="M44 38.5 L52 38.5 L60 46.5 L60 62 L44 62Z" fill="#c2c2c2"/><path d="M52.5 39 L60 46.5 L52.5 46.5Z" fill="#dedede"/><path d="M52.5 38.5 L52.5 47 L60.5 47" fill="none" stroke="#111" stroke-width="1.6"/><rect x="48.5" y="50" width="7.5" height="8" fill="#2c2c2c"/><rect x="40" y="52.5" width="10" height="11.5" fill="#c6c6c6"/><path d="M39.5 52.2 L50.5 52.2 L50.5 64" fill="none" stroke="#111" stroke-width="1.4"/></g>
</svg>
<div class="t" style="left:1965px;top:295px;font-size:23px;color:#f2f2f2">11</div>
<div class="a" style="left:1816px;top:419px;width:436px;height:2px;background:#3c3c3c"></div>
<div class="a" style="left:1876px;top:342px;width:2px;height:79px;background:#3f3f3f"></div>
<div class="a" style="left:1834px;top:370px;width:24px;height:24px;background:#535353;border-top:2px solid #7a7a7a;border-left:2px solid #7a7a7a;border-bottom:2px solid #2e2e2e;border-right:2px solid #2e2e2e"></div>
<svg style="left:1884px;top:350px" width="64" height="64" viewBox="0 0 64 64">
<path d="M1 1 L63 1 L63 37 L38 37 L38 63 L1 63Z" fill="url(#ck4)" stroke="#000" stroke-width="2.4"/>
<svg x="2" y="2" width="60" height="60" viewBox="0 0 1210 1210"><use href="#ch" width="1210" height="1210"/></svg>
<path d="M38 37 L63 37 L63 63 L38 63Z" fill="#535353"/>
<g><path d="M44 38.5 L52 38.5 L60 46.5 L60 62 L44 62Z" fill="#c2c2c2"/><path d="M52.5 39 L60 46.5 L52.5 46.5Z" fill="#dedede"/><path d="M52.5 38.5 L52.5 47 L60.5 47" fill="none" stroke="#111" stroke-width="1.6"/><rect x="48.5" y="50" width="7.5" height="8" fill="#2c2c2c"/><rect x="40" y="52.5" width="10" height="11.5" fill="#c6c6c6"/><path d="M39.5 52.2 L50.5 52.2 L50.5 64" fill="none" stroke="#111" stroke-width="1.4"/></g>
</svg>
<div class="t" style="left:1965px;top:373px;font-size:23px;color:#f2f2f2">10</div>
<div class="a" style="left:1816px;top:497px;width:436px;height:2px;background:#3c3c3c"></div>
<div class="a" style="left:1876px;top:420px;width:2px;height:79px;background:#3f3f3f"></div>
<div class="a" style="left:1834px;top:448px;width:24px;height:24px;background:#535353;border-top:2px solid #7a7a7a;border-left:2px solid #7a7a7a;border-bottom:2px solid #2e2e2e;border-right:2px solid #2e2e2e"></div>
<svg style="left:1884px;top:428px" width="64" height="64" viewBox="0 0 64 64">
<path d="M1 1 L63 1 L63 37 L38 37 L38 63 L1 63Z" fill="url(#ck4)" stroke="#000" stroke-width="2.4"/>
<svg x="2" y="2" width="60" height="60" viewBox="0 0 1210 1210"><use href="#ch" width="1210" height="1210"/></svg>
<path d="M38 37 L63 37 L63 63 L38 63Z" fill="#535353"/>
<g><path d="M44 38.5 L52 38.5 L60 46.5 L60 62 L44 62Z" fill="#c2c2c2"/><path d="M52.5 39 L60 46.5 L52.5 46.5Z" fill="#dedede"/><path d="M52.5 38.5 L52.5 47 L60.5 47" fill="none" stroke="#111" stroke-width="1.6"/><rect x="48.5" y="50" width="7.5" height="8" fill="#2c2c2c"/><rect x="40" y="52.5" width="10" height="11.5" fill="#c6c6c6"/><path d="M39.5 52.2 L50.5 52.2 L50.5 64" fill="none" stroke="#111" stroke-width="1.4"/></g>
</svg>
<div class="t" style="left:1965px;top:451px;font-size:23px;color:#f2f2f2">9</div>
<div class="a" style="left:1816px;top:575px;width:436px;height:2px;background:#3c3c3c"></div>
<div class="a" style="left:1876px;top:498px;width:2px;height:79px;background:#3f3f3f"></div>
<div class="a" style="left:1834px;top:526px;width:24px;height:24px;background:#535353;border-top:2px solid #7a7a7a;border-left:2px solid #7a7a7a;border-bottom:2px solid #2e2e2e;border-right:2px solid #2e2e2e"></div>
<svg style="left:1884px;top:506px" width="64" height="64" viewBox="0 0 64 64">
<path d="M1 1 L63 1 L63 37 L38 37 L38 63 L1 63Z" fill="url(#ck4)" stroke="#000" stroke-width="2.4"/>
<svg x="2" y="2" width="60" height="60" viewBox="0 0 1210 1210"><use href="#ch" width="1210" height="1210"/></svg>
<path d="M38 37 L63 37 L63 63 L38 63Z" fill="#535353"/>
<g><path d="M44 38.5 L52 38.5 L60 46.5 L60 62 L44 62Z" fill="#c2c2c2"/><path d="M52.5 39 L60 46.5 L52.5 46.5Z" fill="#dedede"/><path d="M52.5 38.5 L52.5 47 L60.5 47" fill="none" stroke="#111" stroke-width="1.6"/><rect x="48.5" y="50" width="7.5" height="8" fill="#2c2c2c"/><rect x="40" y="52.5" width="10" height="11.5" fill="#c6c6c6"/><path d="M39.5 52.2 L50.5 52.2 L50.5 64" fill="none" stroke="#111" stroke-width="1.4"/></g>
</svg>
<div class="t" style="left:1965px;top:529px;font-size:23px;color:#f2f2f2">8</div>
<div class="a" style="left:1816px;top:653px;width:436px;height:2px;background:#3c3c3c"></div>
<div class="a" style="left:1876px;top:576px;width:2px;height:79px;background:#3f3f3f"></div>
<div class="a" style="left:1834px;top:604px;width:24px;height:24px;background:#535353;border-top:2px solid #7a7a7a;border-left:2px solid #7a7a7a;border-bottom:2px solid #2e2e2e;border-right:2px solid #2e2e2e"></div>
<svg style="left:1884px;top:584px" width="64" height="64" viewBox="0 0 64 64">
<path d="M1 1 L63 1 L63 37 L38 37 L38 63 L1 63Z" fill="url(#ck4)" stroke="#000" stroke-width="2.4"/>
<svg x="2" y="2" width="60" height="60" viewBox="0 0 1210 1210"><use href="#ch" width="1210" height="1210"/></svg>
<path d="M38 37 L63 37 L63 63 L38 63Z" fill="#535353"/>
<g><path d="M44 38.5 L52 38.5 L60 46.5 L60 62 L44 62Z" fill="#c2c2c2"/><path d="M52.5 39 L60 46.5 L52.5 46.5Z" fill="#dedede"/><path d="M52.5 38.5 L52.5 47 L60.5 47" fill="none" stroke="#111" stroke-width="1.6"/><rect x="48.5" y="50" width="7.5" height="8" fill="#2c2c2c"/><rect x="40" y="52.5" width="10" height="11.5" fill="#c6c6c6"/><path d="M39.5 52.2 L50.5 52.2 L50.5 64" fill="none" stroke="#111" stroke-width="1.4"/></g>
</svg>
<div class="t" style="left:1965px;top:607px;font-size:23px;color:#f2f2f2">7</div>
<div class="a" style="left:1816px;top:731px;width:436px;height:2px;background:#3c3c3c"></div>
<div class="a" style="left:1876px;top:654px;width:2px;height:79px;background:#3f3f3f"></div>
<div class="a" style="left:1834px;top:682px;width:24px;height:24px;background:#535353;border-top:2px solid #7a7a7a;border-left:2px solid #7a7a7a;border-bottom:2px solid #2e2e2e;border-right:2px solid #2e2e2e"></div>
<svg style="left:1884px;top:662px" width="64" height="64" viewBox="0 0 64 64">
<path d="M1 1 L63 1 L63 37 L38 37 L38 63 L1 63Z" fill="url(#ck4)" stroke="#000" stroke-width="2.4"/>
<svg x="2" y="2" width="60" height="60" viewBox="0 0 1210 1210"><use href="#ch" width="1210" height="1210"/></svg>
<path d="M38 37 L63 37 L63 63 L38 63Z" fill="#535353"/>
<g><path d="M44 38.5 L52 38.5 L60 46.5 L60 62 L44 62Z" fill="#c2c2c2"/><path d="M52.5 39 L60 46.5 L52.5 46.5Z" fill="#dedede"/><path d="M52.5 38.5 L52.5 47 L60.5 47" fill="none" stroke="#111" stroke-width="1.6"/><rect x="48.5" y="50" width="7.5" height="8" fill="#2c2c2c"/><rect x="40" y="52.5" width="10" height="11.5" fill="#c6c6c6"/><path d="M39.5 52.2 L50.5 52.2 L50.5 64" fill="none" stroke="#111" stroke-width="1.4"/></g>
</svg>
<div class="t" style="left:1965px;top:685px;font-size:23px;color:#f2f2f2">6</div>
<div class="a" style="left:1816px;top:809px;width:436px;height:2px;background:#3c3c3c"></div>
<div class="a" style="left:1876px;top:732px;width:2px;height:79px;background:#3f3f3f"></div>
<div class="a" style="left:1834px;top:760px;width:24px;height:24px;background:#535353;border-top:2px solid #7a7a7a;border-left:2px solid #7a7a7a;border-bottom:2px solid #2e2e2e;border-right:2px solid #2e2e2e"></div>
<svg style="left:1884px;top:740px" width="64" height="64" viewBox="0 0 64 64">
<path d="M1 1 L63 1 L63 37 L38 37 L38 63 L1 63Z" fill="url(#ck4)" stroke="#000" stroke-width="2.4"/>
<svg x="2" y="2" width="60" height="60" viewBox="0 0 1210 1210"><use href="#ch" width="1210" height="1210"/></svg>
<path d="M38 37 L63 37 L63 63 L38 63Z" fill="#535353"/>
<g><path d="M44 38.5 L52 38.5 L60 46.5 L60 62 L44 62Z" fill="#c2c2c2"/><path d="M52.5 39 L60 46.5 L52.5 46.5Z" fill="#dedede"/><path d="M52.5 38.5 L52.5 47 L60.5 47" fill="none" stroke="#111" stroke-width="1.6"/><rect x="48.5" y="50" width="7.5" height="8" fill="#2c2c2c"/><rect x="40" y="52.5" width="10" height="11.5" fill="#c6c6c6"/><path d="M39.5 52.2 L50.5 52.2 L50.5 64" fill="none" stroke="#111" stroke-width="1.4"/></g>
</svg>
<div class="t" style="left:1965px;top:763px;font-size:23px;color:#f2f2f2">5</div>
<div class="a" style="left:1816px;top:887px;width:436px;height:2px;background:#3c3c3c"></div>
<div class="a" style="left:1876px;top:810px;width:2px;height:79px;background:#3f3f3f"></div>
<div class="a" style="left:1834px;top:838px;width:24px;height:24px;background:#535353;border-top:2px solid #7a7a7a;border-left:2px solid #7a7a7a;border-bottom:2px solid #2e2e2e;border-right:2px solid #2e2e2e"></div>
<svg style="left:1884px;top:818px" width="64" height="64" viewBox="0 0 64 64">
<path d="M1 1 L63 1 L63 37 L38 37 L38 63 L1 63Z" fill="url(#ck4)" stroke="#000" stroke-width="2.4"/>
<svg x="2" y="2" width="60" height="60" viewBox="0 0 1210 1210"><use href="#ch" width="1210" height="1210"/></svg>
<path d="M38 37 L63 37 L63 63 L38 63Z" fill="#535353"/>
<g><path d="M44 38.5 L52 38.5 L60 46.5 L60 62 L44 62Z" fill="#c2c2c2"/><path d="M52.5 39 L60 46.5 L52.5 46.5Z" fill="#dedede"/><path d="M52.5 38.5 L52.5 47 L60.5 47" fill="none" stroke="#111" stroke-width="1.6"/><rect x="48.5" y="50" width="7.5" height="8" fill="#2c2c2c"/><rect x="40" y="52.5" width="10" height="11.5" fill="#c6c6c6"/><path d="M39.5 52.2 L50.5 52.2 L50.5 64" fill="none" stroke="#111" stroke-width="1.4"/></g>
</svg>
<div class="t" style="left:1965px;top:841px;font-size:23px;color:#f2f2f2">4</div>
<div class="a" style="left:1816px;top:965px;width:436px;height:2px;background:#3c3c3c"></div>
<div class="a" style="left:1876px;top:888px;width:2px;height:79px;background:#3f3f3f"></div>
<div class="a" style="left:1834px;top:916px;width:24px;height:24px;background:#535353;border-top:2px solid #7a7a7a;border-left:2px solid #7a7a7a;border-bottom:2px solid #2e2e2e;border-right:2px solid #2e2e2e"></div>
<svg style="left:1884px;top:896px" width="64" height="64" viewBox="0 0 64 64">
<path d="M1 1 L63 1 L63 37 L38 37 L38 63 L1 63Z" fill="url(#ck4)" stroke="#000" stroke-width="2.4"/>
<svg x="2" y="2" width="60" height="60" viewBox="0 0 1210 1210"><use href="#ch" width="1210" height="1210"/></svg>
<path d="M38 37 L63 37 L63 63 L38 63Z" fill="#535353"/>
<g><path d="M44 38.5 L52 38.5 L60 46.5 L60 62 L44 62Z" fill="#c2c2c2"/><path d="M52.5 39 L60 46.5 L52.5 46.5Z" fill="#dedede"/><path d="M52.5 38.5 L52.5 47 L60.5 47" fill="none" stroke="#111" stroke-width="1.6"/><rect x="48.5" y="50" width="7.5" height="8" fill="#2c2c2c"/><rect x="40" y="52.5" width="10" height="11.5" fill="#c6c6c6"/><path d="M39.5 52.2 L50.5 52.2 L50.5 64" fill="none" stroke="#111" stroke-width="1.4"/></g>
</svg>
<div class="t" style="left:1965px;top:919px;font-size:23px;color:#f2f2f2">3</div>
<div class="a" style="left:1816px;top:1043px;width:436px;height:2px;background:#3c3c3c"></div>
<div class="a" style="left:1876px;top:966px;width:2px;height:79px;background:#3f3f3f"></div>
<div class="a" style="left:1834px;top:994px;width:24px;height:24px;background:#535353;border-top:2px solid #7a7a7a;border-left:2px solid #7a7a7a;border-bottom:2px solid #2e2e2e;border-right:2px solid #2e2e2e"></div>
<svg style="left:1884px;top:974px" width="64" height="64" viewBox="0 0 64 64">
<path d="M1 1 L63 1 L63 37 L38 37 L38 63 L1 63Z" fill="url(#ck4)" stroke="#000" stroke-width="2.4"/>
<svg x="2" y="2" width="60" height="60" viewBox="0 0 1210 1210"><use href="#ch" width="1210" height="1210"/></svg>
<path d="M38 37 L63 37 L63 63 L38 63Z" fill="#535353"/>
<g><path d="M44 38.5 L52 38.5 L60 46.5 L60 62 L44 62Z" fill="#c2c2c2"/><path d="M52.5 39 L60 46.5 L52.5 46.5Z" fill="#dedede"/><path d="M52.5 38.5 L52.5 47 L60.5 47" fill="none" stroke="#111" stroke-width="1.6"/><rect x="48.5" y="50" width="7.5" height="8" fill="#2c2c2c"/><rect x="40" y="52.5" width="10" height="11.5" fill="#c6c6c6"/><path d="M39.5 52.2 L50.5 52.2 L50.5 64" fill="none" stroke="#111" stroke-width="1.4"/></g>
</svg>
<div class="t" style="left:1965px;top:997px;font-size:23px;color:#f2f2f2">2</div>
<div class="a" style="left:1878px;top:1046px;width:374px;height:77px;background:#6b7b95"></div>
<div class="a" style="left:1816px;top:1121px;width:436px;height:2px;background:#3c3c3c"></div>
<div class="a" style="left:1876px;top:1044px;width:2px;height:79px;background:#3f3f3f"></div>
<svg style="left:1832px;top:1073px" width="28" height="20"><path d="M1 10 C7 1 21 1 27 10 C21 19 7 19 1 10Z" fill="#c4c4c4"/><path d="M1 10 C7 1 21 1 27 10" fill="none" stroke="#1e1e1e" stroke-width="1.5"/><circle cx="14" cy="10" r="6" fill="#333"/><circle cx="16" cy="7.5" r="2" fill="#bbb"/></svg>
<svg style="left:1884px;top:1051px" width="64" height="64" viewBox="0 0 64 64">
<path d="M1 1 L63 1 L63 37 L38 37 L38 63 L1 63Z" fill="url(#ck4)" stroke="#000" stroke-width="2.4"/>
<svg x="2" y="2" width="60" height="60" viewBox="0 0 1210 1210"><use href="#ch" width="1210" height="1210"/></svg>
<path d="M38 37 L63 37 L63 63 L38 63Z" fill="#6b7b95"/>
<g><path d="M44 38.5 L52 38.5 L60 46.5 L60 62 L44 62Z" fill="#c2c2c2"/><path d="M52.5 39 L60 46.5 L52.5 46.5Z" fill="#dedede"/><path d="M52.5 38.5 L52.5 47 L60.5 47" fill="none" stroke="#111" stroke-width="1.6"/><rect x="48.5" y="50" width="7.5" height="8" fill="#2c2c2c"/><rect x="40" y="52.5" width="10" height="11.5" fill="#c6c6c6"/><path d="M39.5 52.2 L50.5 52.2 L50.5 64" fill="none" stroke="#111" stroke-width="1.4"/></g>
</svg>
<svg style="left:1879px;top:1047px" width="74" height="74"><g fill="none" stroke="#fff" stroke-width="2.8"><path d="M2 24 L2 2 L24 2"/><path d="M50 2 L72 2 L72 24"/><path d="M72 50 L72 72 L50 72"/><path d="M24 72 L2 72 L2 50"/></g></svg>
<div class="t" style="left:1965px;top:1075px;font-size:23px;color:#f2f2f2">1</div>
<div class="a" style="left:1816px;top:1137px;width:466px;height:2px;background:#393939"></div>
<div class="a" style="left:1816px;top:1139px;width:466px;height:35px;background:#535353;border-top:1px solid #636363"></div>
<div class="a" style="left:1816px;top:1174px;width:466px;height:2px;background:#393939"></div>
<div class="a" style="left:1816px;top:1176px;width:466px;height:14px;background:linear-gradient(#5a5a5a,#4e4e4e)"></div>
<div class="a" style="left:1816px;top:1190px;width:472px;height:2px;background:#333"></div>
<svg style="left:2028px;top:1177px" width="44" height="9"><g fill="#262626"><rect x="0" y="0" width="2" height="8"/><rect x="4" y="0" width="2" height="8"/><rect x="8" y="0" width="2" height="8"/><rect x="12" y="0" width="2" height="8"/><rect x="16" y="0" width="2" height="8"/><rect x="20" y="0" width="2" height="8"/><rect x="24" y="0" width="2" height="8"/><rect x="28" y="0" width="2" height="8"/><rect x="32" y="0" width="2" height="8"/><rect x="36" y="0" width="2" height="8"/><rect x="40" y="0" width="2" height="8"/></g></svg>
<svg style="left:1875px;top:1149px" width="32" height="18"><g fill="none" stroke="#bdbdbd" stroke-width="4"><ellipse cx="9" cy="8.5" rx="6.5" ry="6"/><ellipse cx="21" cy="8.5" rx="6.5" ry="6"/></g><rect x="9" y="6.5" width="12" height="4" rx="2" fill="#a8a8a8" stroke="#3a3a3a" stroke-width="1"/></svg>
<div class="t" style="left:1932px;top:1143px;font-family:'Liberation Serif',serif;font-style:italic;font-size:30px;color:#d2d2d2">fx</div>
<svg style="left:1959px;top:1166px" width="8" height="6"><rect x="0" y="0" width="7" height="2" fill="#ddd"/><rect x="2.5" y="2" width="2" height="3" fill="#ddd"/></svg>
<svg style="left:1986px;top:1146px" width="27" height="23"><rect x="0" y="0" width="26" height="22" fill="#cbcbcb"/><circle cx="13" cy="11" r="5.5" fill="#474747"/></svg>
<svg style="left:2041px;top:1146px" width="24" height="24"><circle cx="11" cy="11" r="9.5" fill="#4a4a4a" stroke="#d0d0d0" stroke-width="2.2"/><path d="M4.3 17.7 A9.5 9.5 0 0 1 17.7 4.3Z" fill="#d0d0d0"/></svg>
<svg style="left:2066px;top:1166px" width="8" height="6"><rect x="0" y="0" width="7" height="2" fill="#ddd"/><rect x="2.5" y="2" width="2" height="3" fill="#ddd"/></svg>
<svg style="left:2094px;top:1145px" width="25" height="22"><path d="M0 1 L10 1 L13 4 L24 4 L24 21 L0 21Z" fill="#cdcdcd"/></svg>
<svg style="left:2150px;top:1145px" width="21" height="22"><path d="M0 0 L20 0 L20 21 L9 21 L0 12Z" fill="#cdcdcd"/><path d="M0 12 L9 12 L9 21" fill="none" stroke="#222" stroke-width="1.5"/></svg>
<svg style="left:2201px;top:1145px" width="24" height="24"><path d="M8 5 L8 2 L15 2 L15 5" fill="none" stroke="#d0d0d0" stroke-width="2"/><rect x="0.5" y="5" width="22" height="3.5" rx="1.5" fill="#d0d0d0"/><path d="M3 10 L20 10 L19 22 L4 22Z" fill="#d0d0d0"/><g fill="#444"><rect x="6.5" y="11" width="2" height="9"/><rect x="10.5" y="11" width="2" height="9"/><rect x="14.5" y="11" width="2" height="9"/></g></svg>
<svg style="left:2260px;top:1152px" width="18" height="18"><g fill="#1a1a1a"><rect x="16" y="0" width="2" height="2"/><rect x="12" y="4" width="2" height="2"/><rect x="16" y="4" width="2" height="2"/><rect x="8" y="8" width="2" height="2"/><rect x="12" y="8" width="2" height="2"/><rect x="16" y="8" width="2" height="2"/><rect x="4" y="12" width="2" height="2"/><rect x="8" y="12" width="2" height="2"/><rect x="12" y="12" width="2" height="2"/><rect x="16" y="12" width="2" height="2"/><rect x="0" y="16" width="2" height="2"/><rect x="4" y="16" width="2" height="2"/><rect x="8" y="16" width="2" height="2"/><rect x="12" y="16" width="2" height="2"/><rect x="16" y="16" width="2" height="2"/></g></svg>
<!-- right dock strip -->
<div class="a" style="left:2282px;top:34px;width:38px;height:1165px;background:#2c2c2c"></div>
<div class="a" style="left:2287px;top:43px;width:33px;height:1122px;background:#3f3f3f"></div>
<div class="a" style="left:2287px;top:1165px;width:33px;height:34px;background:#565656"></div>
<div class="a" style="left:2296px;top:385px;width:16px;height:406px;border-radius:8px;background:linear-gradient(90deg,#7e7e7e,#9a9a9a 50%,#808080)"></div>

<!-- timeline -->
<div class="a" style="left:1816px;top:1192px;width:471px;height:6px;background:#383838"></div>
<div class="a" style="left:76px;top:1198px;width:2244px;height:6px;background:#262626;border-top:2px solid #2e2e2e;border-bottom:2px solid #2a2a2a"></div>
<div class="a" style="left:76px;top:1204px;width:2244px;height:34px;background:#3a3a3a;border-top:2px solid #474747;border-bottom:1px solid #2c2c2c"></div>
<div class="a" style="left:76px;top:1204px;width:92px;height:34px;background:#535353;border-top:2px solid #676767"></div>
<div class="t" style="left:91px;top:1210px;font-size:22px;color:#eaeaea">时间轴</div>
<div class="a" style="left:76px;top:1238px;width:2244px;height:206px;background:#535353;border-top:2px solid #656565"></div>
<div class="a" style="left:76px;top:1312px;width:2244px;height:2px;background:#3a3a3a"></div>
<div class="a" style="left:452px;top:1244px;width:2px;height:68px;background:#3a3a3a"></div>
<div class="a" style="left:594px;top:1240px;width:2px;height:72px;background:#3a3a3a"></div>
<div class="a" style="left:2232px;top:1240px;width:2px;height:72px;background:#3a3a3a"></div>
<div class="a" style="left:76px;top:1444px;width:2244px;height:3px;background:#3a3a3a"></div>
<div class="a" style="left:76px;top:1447px;width:2244px;height:33px;background:#535353;border-top:1px solid #646464"></div>
<div class="a" style="left:912px;top:1444px;width:1376px;height:36px;background:linear-gradient(#353535,#3d3d3d)"></div>
<div class="a" style="left:593px;top:1447px;width:2px;height:33px;background:#3a3a3a"></div>


<!-- timeline controls -->
<svg style="left:76px;top:1238px" width="2244" height="242" viewBox="76 1238 2244 242">
<g fill="#8f8f8f">
<rect x="94" y="1266" width="4" height="17"/><path d="M116 1266 L116 1283 L100 1274.5Z"/>
<path d="M154 1274.5 L170 1266 L170 1283Z"/><rect x="172.5" y="1266" width="4" height="17"/>
<path d="M219 1265 L238.5 1274.5 L219 1284Z"/>
<rect x="280" y="1266" width="4" height="17"/><path d="M286 1266 L303 1274.5 L286 1283Z"/>
<path d="M339 1270 L344 1270 L352 1264 L352 1285 L344 1279 L339 1279Z"/>
</g>
<g transform="translate(415 1275)">
<circle r="7" fill="none" stroke="#8f8f8f" stroke-width="5"/>
<g fill="#8f8f8f">
<rect x="-2" y="-11" width="4" height="5"/><rect x="-2" y="6" width="4" height="5"/><rect x="-11" y="-2" width="5" height="4"/><rect x="6" y="-2" width="5" height="4"/>
<rect x="-2" y="-11" width="4" height="5" transform="rotate(45)"/><rect x="-2" y="6" width="4" height="5" transform="rotate(45)"/><rect x="-11" y="-2" width="5" height="4" transform="rotate(45)"/><rect x="6" y="-2" width="5" height="4" transform="rotate(45)"/>
</g>
</g>
<path d="M432 1295 L437 1295 L434.5 1298Z" fill="#444"/>
<g fill="none" stroke="#8f8f8f" stroke-width="2.6">
<circle cx="478" cy="1266" r="4.2"/><circle cx="478" cy="1282" r="4.2"/>
<path d="M482 1268 L505 1282 M482 1280 L505 1264"/>
</g>
<rect x="542.5" y="1262.5" width="23" height="23" fill="#5a5a5a" stroke="#8f8f8f" stroke-width="2.5"/>
<path d="M543 1285 L565 1263 L565 1285Z" fill="#8f8f8f"/>
<!-- bottom bar items -->
<g fill="none" stroke="#8a8a8a" stroke-width="1.3">
<rect x="88.5" y="1459.5" width="9" height="12"/><rect x="100.5" y="1459.5" width="9" height="12"/><rect x="112.5" y="1459.5" width="9" height="12"/>
</g>
<g fill="#2a2a2a"><rect x="88" y="1458" width="10" height="1.5"/><rect x="100" y="1458" width="10" height="1.5"/><rect x="112" y="1458" width="10" height="1.5"/></g>
<path d="M148 1476 C150 1462 158 1458 166 1458 L166 1453 L176 1462 L166 1471 L166 1465 C158 1465 152 1468 148 1476Z" fill="#8a8a8a"/>
<g fill="none" stroke="#8a8a8a" stroke-width="1.4">
<path d="M613 1466 L620 1459 L625 1463 L628 1459 L634 1466Z"/>
<path d="M864 1471 L874 1461 L880 1466 L886 1456 L897 1471Z"/>
</g>
<rect x="672" y="1456" width="164" height="11" rx="5.5" fill="#2e2e2e" stroke="#616161" stroke-width="1"/>
<!-- menu icon -->
<path d="M2283.5 1216.5 L2293.5 1216.5 L2288.5 1223Z" fill="#c8c8c8"/>
<g fill="#e0e0e0"><rect x="2296" y="1212" width="16" height="2.5"/><rect x="2296" y="1216.5" width="16" height="2.5"/><rect x="2296" y="1221" width="16" height="2.5"/><rect x="2296" y="1225.5" width="16" height="2.5"/></g>
</svg>
<div class="a" style="left:1074px;top:1360px;width:204px;height:38px;border-radius:6px;background:linear-gradient(#6c6c6c,#585858);border:2px solid #262626;box-shadow:0 1px 0 #5f5f5f"></div>
<div class="t" style="left:1120px;top:1367px;font-size:22px;color:#f2f2f2;letter-spacing:0.4px">创建帧动画</div>
<div class="a" style="left:1282px;top:1360px;width:40px;height:38px;border-radius:6px;background:linear-gradient(#6c6c6c,#585858);border:2px solid #262626;box-shadow:0 1px 0 #5f5f5f"></div>
<svg style="left:1289px;top:1371px" width="26" height="16"><rect x="0" y="0" width="25" height="1.5" fill="#1e1e1e"/><path d="M0.5 2 L24.5 2 L12.5 15Z" fill="#ececec"/></svg>

</body></html>
